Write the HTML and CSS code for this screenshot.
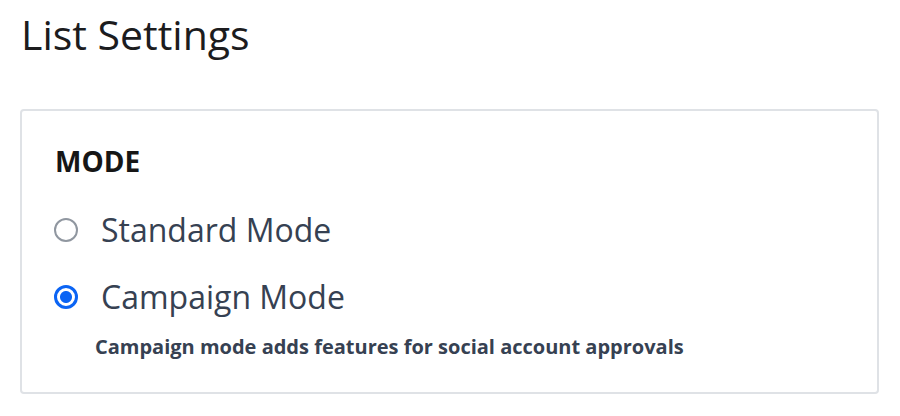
FILE: index.html
```html
<!DOCTYPE html>
<html lang="en">
<head>
    <meta charset="UTF-8">
    <meta name="viewport" content="width=device-width, initial-scale=1.0">
    <title>List Settings</title>
    <link rel="stylesheet" href="styles.css">
</head>
<body>
    <h1>List Settings</h1>

    <div class="panel">
        <h2 class="panel-title">MODE</h2>

        <label class="radio-row">
            <input type="radio" name="mode" value="standard">
            <span>Standard Mode</span>
        </label>

        <label class="radio-row">
            <input type="radio" name="mode" value="campaign" checked>
            <span>Campaign Mode</span>
        </label>

        <p class="hint">Campaign mode adds features for social account approvals</p>
    </div>
</body>
</html>
```

FILE: styles.css
```css
body {
    font-family: 'Open Sans', 'Noto Sans', sans-serif;
    margin: 0;
    padding: 0 21px 0 20px;
    background-color: #fff;
    color: #1c1c1e;
}

h1 {
    font-size: 41px;
    font-weight: 400;
    line-height: 54px;
    margin: 7px 0 48px 1px;
    color: #1c1c1e;
}

.panel {
    border: 2px solid #dfe2e6;
    border-radius: 4px;
    padding: 31px 32px 32px 32px;
}

.panel-title {
    font-size: 28px;
    font-weight: 700;
    line-height: 38px;
    margin: 0 0 28px 1px;
    color: #161616;
}

.radio-row {
    display: flex;
    align-items: center;
    gap: 23px;
    height: 44px;
    font-size: 32px;
    line-height: 44px;
    color: #364152;
    cursor: pointer;
}

.radio-row + .radio-row {
    margin-top: 23px;
}

.radio-row input {
    appearance: none;
    -webkit-appearance: none;
    width: 24px;
    height: 24px;
    margin: 0;
    border: 2.5px solid #9097a0;
    border-radius: 50%;
    background: #fff;
    flex-shrink: 0;
}

.radio-row input:checked {
    border: 3px solid #0b64f4;
    background: radial-gradient(circle, #0b64f4 0, #0b64f4 5.5px, #fff 6.5px);
}

.hint {
    margin: 14px 0 0 41px;
    font-size: 20px;
    font-weight: 700;
    line-height: 27px;
    color: #364152;
}
```
